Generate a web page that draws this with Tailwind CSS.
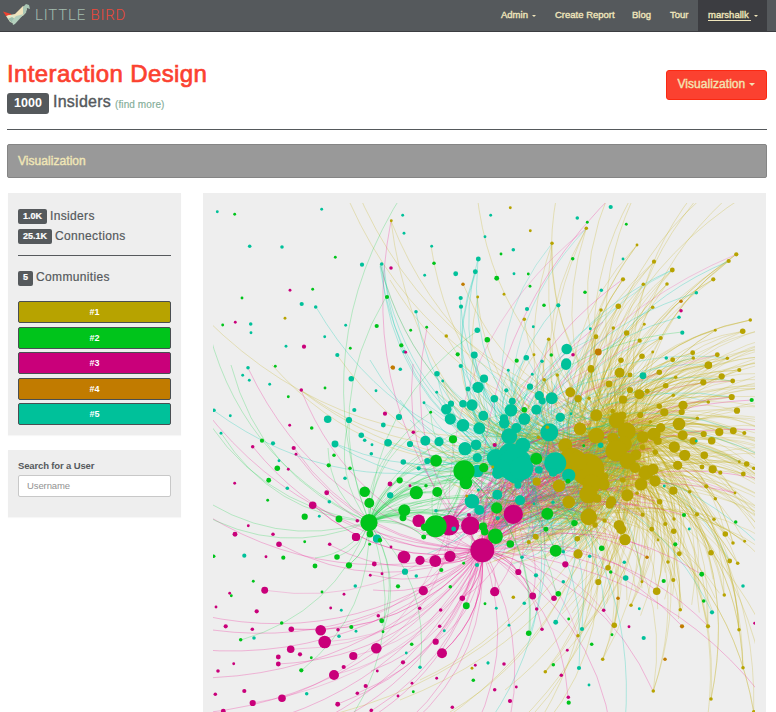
<!DOCTYPE html>
<html lang="en">
<head>
<meta charset="utf-8">
<title>Little Bird - Interaction Design</title>
<script src="https://cdn.jsdelivr.net/npm/@tailwindcss/browser@4"></script>
</head>
<body class="h-[712px] w-[776px] overflow-hidden bg-white font-['Liberation_Sans',Arial,sans-serif] text-[#55595c]">
<header class="flex h-8 items-stretch justify-between border-b border-[#3c3d41] bg-[#55595c]">
  <a class="flex items-start pl-[3px]">
    <svg class="mt-[3px]" width="28" height="23" viewBox="0 0 28 23">
      <path d="M0 8.5 8 11 9 14 3 13Z" fill="#f0412f"/>
      <path d="M4 12.5 12 11 20 3 24 6 21 12 16 15 9 16Z" fill="#f1e3bb"/>
      <path d="M20 4 23 1 26 2 27 6 24 5 23 10 20 12Z" fill="#a9c6b4"/>
      <path d="M3 13 10 12 16 14 10 20 7 19Z" fill="#e4e5c6"/>
      <path d="M5 16 9 14 12 16 9 20Z" fill="#9dc0ae"/>
      <path d="M9 18 13 13 21 11 12 21 10 22Z" fill="#b4d0bd"/>
    </svg>
    <span class="ml-[4px] mt-[7px] whitespace-pre font-['Roboto',sans-serif] text-[15px] font-light leading-4 tracking-[0.8px] text-[#a3bcae]">LITTLE <span class="text-[#f0483a]">BIRD</span></span>
  </a>
  <nav class="flex text-[9.5px] leading-[30px] text-[#f0e6bc] [-webkit-text-stroke:0.35px]">
    <span class="flex h-[30px] w-[54px] items-center">Admin<i class="ml-1 mt-px border-x-2 border-t-2 border-x-transparent"></i></span>
    <span class="w-[77px]">Create Report</span>
    <span class="w-[38px]">Blog</span>
    <span class="w-[28px]">Tour</span>
    <span class="mr-[9px] flex w-[69px] items-center bg-[#3c3d41] pl-[10px]"><span class="whitespace-pre border-b border-[#f0e6bc] leading-[10px]">marshallk </span><i class="ml-[3px] mt-px border-x-2 border-t-2 border-x-transparent"></i></span>
  </nav>
</header>

<main class="pl-[7px] pr-[9px]">
  <section class="flex h-[98px] justify-between border-b border-[#55595c]">
    <div class="pt-[28px]">
      <h1 class="text-[24px] leading-[28px] tracking-[0.38px] text-[#fb4130] [-webkit-text-stroke:0.7px]">Interaction Design</h1>
      <div class="mt-[5px] flex items-center">
        <span class="flex h-[21px] w-[42px] items-center justify-center rounded-[3px] bg-[#55595c] text-[12.5px] font-bold text-white">1000</span>
        <span class="-mt-[3px] ml-1 text-[16px] leading-4 tracking-[0.25px] [-webkit-text-stroke:0.4px]">Insiders</span>
        <span class="ml-1 mt-[2px] text-[10px] leading-3 tracking-[0.1px] text-[#84ad98] [-webkit-text-stroke:0.15px]">(find more)</span>
      </div>
    </div>
    <button class="mt-[38px] flex h-[30px] w-[101px] items-center rounded-[3px] border border-[#fb2912] bg-[#fb4130] pb-[2px] pl-[10.5px] text-[12px] tracking-[0.05px] text-[#f3e3b3] [-webkit-text-stroke:0.4px]">Visualization<i class="ml-1 border-x-[3px] border-t-[3px] border-x-transparent"></i></button>
  </section>
  <h2 class="mt-[14px] flex h-[34px] items-center rounded-[2px] border border-[#858585] bg-[#999] pl-[10px] text-[12px] tracking-[0.05px] text-[#f0e6b6] [-webkit-text-stroke:0.4px]">Visualization</h2>
  <div class="mt-[15px] flex">
    <aside class="ml-px w-[173px] shrink-0 text-[12px] tracking-[0.35px]">
      <div class="h-[242px] bg-[#eee] px-[10px] pt-[13px] shadow-[0_1px_1px_#00000008]">
        <p class="flex h-5 items-center [-webkit-text-stroke:0.2px]"><b class="mr-[3px] mt-px flex h-[15px] w-[29px] items-center justify-center rounded-[2px] bg-[#55595c] text-[9px] tracking-normal text-white">1.0K</b>Insiders</p>
        <p class="flex h-5 items-center [-webkit-text-stroke:0.2px]"><b class="mr-[3px] mt-px flex h-[15px] w-[34px] items-center justify-center rounded-[2px] bg-[#55595c] text-[9px] tracking-normal text-white">25.1K</b>Connections</p>
        <hr class="mt-[9px] border-[#55595c]">
        <p class="mt-[11px] flex h-5 items-center [-webkit-text-stroke:0.2px]"><b class="mr-[3px] mt-[2px] flex h-[15px] w-[15px] items-center justify-center rounded-[2px] bg-[#55595c] text-[9px] tracking-normal text-white">5</b>Communities</p>
        <div class="mt-[14px] flex flex-col gap-[3.5px] text-center text-[9px] font-bold leading-5 tracking-normal text-white">
          <span class="h-[22px] rounded-[2px] border border-[#494e52] bg-[#b7a300]">#1</span>
          <span class="h-[22px] rounded-[2px] border border-[#494e52] bg-[#00c41b]">#2</span>
          <span class="h-[22px] rounded-[2px] border border-[#494e52] bg-[#c9007a]">#3</span>
          <span class="h-[22px] rounded-[2px] border border-[#494e52] bg-[#c17b00]">#4</span>
          <span class="h-[22px] rounded-[2px] border border-[#494e52] bg-[#00c19a]">#5</span>
        </div>
      </div>
      <div class="mt-[15px] h-[67px] bg-[#eee] px-[10px] pt-[10px] tracking-normal shadow-[0_1px_1px_#00000008]">
        <label class="block text-[9.5px] font-bold leading-3 tracking-[-0.14px]">Search for a User</label>
        <div class="mt-[3px] h-[22px] rounded-[2px] border border-[#c8c8c8] bg-white pl-2 text-[9.5px] leading-5 tracking-[-0.1px] text-[#929292]">Username</div>
      </div>
    </aside>
    <div class="ml-[22px] h-[519px] w-[563px] shrink-0 bg-[#eee] pl-[10px] pt-[10px]">
      <svg id="graph" width="542" height="509" viewBox="213 203 542 509" class="block overflow-hidden"><g id="edges" fill="none" stroke-width="1"></g><g id="nodes"></g></svg>
    </div>
  </div>
</main>

<script>
const COLORS = {y:'#b7a300', g:'#00c41b', p:'#c9007a', o:'#c17b00', t:'#00c19a'};
const LINES = {y:'#c0ad10', g:'#10d040', p:'#ee1490', t:'#00cdb0'};
// Each sheet: origin x, origin y, then colour-keyed "x,y,r" triples at three units per pixel.
const SHEETS = [
[203,193,{
t:'43,56,4 356,49,4 140,160,5 237,162,5 477,215,6 536,213,5 296,333,6 338,342,5 143,393,5 144,419,4 428,397,4 365,431,4 249,460,4 403,486,6 135,524,5',
g:'95,64,4 397,193,4 329,289,4 117,315,4 59,396,4 552,312,6 521,399,6 442,466,4 217,520,4',
p:'564,225,5 261,292,4 97,388,4 303,461,6',y:'565,83,4 246,376,4',o:'568,523,5'}],
[390,193,{
t:'38,67,4 42,121,4 302,67,4 285,131,4 125,160,4 104,247,4 197,242,7 265,198,7 256,236,7 370,170,5 372,242,4 562,75,5 212,315,6 213,341,6 78,356,5 262,412,8 253,486,10 411,348,6 505,337,6 430,401,4 409,494,8 456,505,5 212,519,6 530,468,15 529,511,14 42,476,5',
g:'132,211,5 333,183,4 548,197,5 320,256,7 415,243,4 420,280,4 462,337,5 62,412,4 110,403,4 34,457,6 292,440,8 203,484,6 380,503,6 484,486,5',
p:'47,478,4 549,485,5',y:'361,44,4 421,113,4 486,151,5 342,304,4 263,312,4 403,379,5 169,429,5 476,439,5 432,485,4',o:'219,274,5'}],
[576,193,{
t:'104,42,6 141,198,4 76,292,5 43,407,4 361,299,5 309,373,5 319,419,6 271,495,5',
g:'34,88,4 151,94,4 27,298,5',p:'315,353,5',
y:'31,106,5 183,156,4 234,206,6 289,231,7 141,259,6 202,274,5 273,273,5 481,184,6 458,204,6 412,259,6 127,340,8 75,351,5 230,343,5 205,394,4 112,405,5 152,420,8 60,431,7 191,443,6 254,435,6 198,490,8 230,477,4 135,502,8 290,500,7 350,479,7 352,495,5 397,517,11 424,485,7 454,496,5 418,412,4 500,415,8 523,381,5 45,525,9',
o:'315,325,5 67,477,10'}],
[203,365,{
t:'119,31,4 139,46,4 200,58,4 82,152,4 33,136,5 54,205,4 445,41,8 519,77,4 454,135,6 374,163,11 438,165,9 541,180,7 475,211,8 485,226,5 507,239,4 505,266,5 555,233,11 396,237,10 210,235,6 228,287,4 253,370,5 426,340,5 379,410,5 349,454,4 562,391,9 520,522,9',
g:'366,69,4 256,95,4 326,189,5 177,227,6 393,271,5 377,301,6 441,310,5 223,310,8 197,346,7 194,406,4 485,380,15 499,414,14 498,473,25 501,507,10 408,462,10 305,455,9 531,525,6',
p:'295,75,5 546,146,6 260,181,4 272,249,6 279,268,4 149,245,5 256,313,4 95,355,4 371,383,7 329,421,11 463,467,5 136,482,4 210,508,5 96,508,7 561,357,7 459,516,12',y:''}],
[390,365,{
t:'31,13,5 141,26,8 158,48,4 140,82,4 102,113,4 27,156,9 282,41,12 264,67,16 234,72,7 313,101,11 349,76,6 355,16,4 420,65,9 427,28,4 448,92,13 457,108,10 485,100,17 439,134,14 246,120,16 219,116,11 183,116,9 169,133,15 181,162,16 219,181,18 268,190,17 280,152,14 511,157,13 543,146,4 403,162,17 367,109,10 363,136,18 343,175,15 342,160,12 379,189,14 358,214,23 398,241,22 478,202,26 106,227,14 147,230,13 60,237,9 40,291,8 86,310,6 112,288,9 225,251,19 258,239,15 262,278,13 317,279,26 360,270,34 376,300,50 333,310,25 378,330,26 395,310,34 323,325,16 384,361,10 262,318,18 446,315,11 496,295,32 489,323,12 536,331,19 322,389,14 390,406,14 246,409,21 268,435,14 191,492,7 138,437,5 323,460,6 265,375,4 432,416,4 489,412,5 528,0,14 0,233,5 0,391,8',
g:'403,134,8 122,142,4 189,223,12 138,287,17 222,318,31 228,354,18 281,308,13 439,281,17 29,346,9 79,383,19 142,381,14 108,362,5 43,436,17 39,458,10 137,484,32 104,487,11 101,516,7 320,429,16 472,446,17 553,474,9 468,493,7 279,485,12 284,500,11 316,512,21 534,349,7',
p:'70,202,5 314,240,6 86,467,18 177,481,30 241,482,27 370,448,28 237,450,6 60,362,4',
y:'463,44,5 502,30,5 541,82,14 564,101,10 472,187,5 445,217,5 526,241,20 545,285,36 440,350,12 507,362,18 536,411,18 308,306,4 436,514,7 562,522,6 230,393,4',o:'9,8,6'}],
[576,365,{
t:'201,32,10 74,241,8 361,228,4 265,363,4 340,492,4',g:'527,105,6 23,242,4 324,450,6 479,471,5 0,473,5',
y:'45,13,10 131,23,14 162,30,7 250,22,8 299,37,5 99,57,10 269,62,8 162,75,9 214,79,7 190,88,14 141,104,12 292,91,5 250,124,8 265,142,12 321,121,13 317,141,9 7,101,10 39,100,5 61,151,17 110,139,7 139,152,12 122,166,23 152,199,26 12,191,18 61,212,23 111,220,16 145,237,22 193,150,9 223,170,5 254,188,13 234,208,19 245,228,12 200,216,17 309,177,18 364,160,5 397,111,5 382,52,9 437,34,9 398,0,10 470,48,7 490,15,6 467,96,9 483,137,9 472,197,10 505,204,6 430,201,12 383,207,9 407,227,11 352,228,11 320,211,14 295,246,16 326,271,16 385,271,11 305,301,13 378,306,7 410,313,12 433,323,6 512,297,8 490,290,4 533,310,5 502,327,7 200,247,8 238,262,8 180,269,15 121,257,31 155,288,23 177,308,15 210,323,21 231,313,16 237,348,16 195,358,18 292,377,12 341,380,5 391,364,6 418,401,5 477,384,4 251,410,8 183,385,5 154,391,17 106,409,14 101,419,12 85,335,12 83,358,17 36,314,48 5,287,28 47,356,27 37,388,26 64,401,12 38,456,24 57,480,8 86,467,6 129,481,15 136,493,14 147,524,15 227,493,7 200,449,6 268,477,6 294,462,5 293,499,8 363,448,6 414,463,5 448,507,8 140,345,8'}],
[203,537,{
t:'124,56,6 153,303,5 311,470,5 457,147,5 415,220,4 408,298,5 459,283,4 606,104,9 640,117,5 522,5,12 724,281,4 610,348,4 651,391,5 822,84,6 855,378,4 226,360,4',
g:'32,58,5 151,133,4 241,62,6 305,14,4 336,87,7 402,60,8 438,85,9 500,22,4 531,10,6 662,0,6 715,99,6 742,149,5 782,79,4 585,148,6 357,165,4 85,176,4 113,308,5 236,258,5 295,400,6 325,362,4 445,270,6 536,251,7 540,284,4 626,322,5 631,464,4 811,430,5 790,206,10 846,200,4',
p:'228,22,8 189,59,4 380,22,5 459,0,12 564,30,4 514,81,7 502,115,4 537,110,4 603,60,18 651,70,13 697,72,17 741,58,16 838,40,35 661,161,13 778,184,8 185,160,10 80,169,4 39,210,4 161,223,6 68,268,6 148,277,5 265,277,8 353,280,15 405,278,5 365,315,18 263,337,11 291,352,6 226,360,7 226,381,7 92,380,4 45,402,5 37,472,5 124,462,6 149,498,9 237,484,11 61,523,7 393,414,14 422,390,6 451,357,12 520,334,15 404,502,7 463,469,5 488,447,6 505,520,5 585,477,4 523,402,4 600,376,6 627,439,4 698,314,9 717,349,14 710,268,5 713,219,5 650,214,5 526,236,5 383,213,4 423,172,4 701,424,4 748,511,5 817,385,4',y:'807,394,4'}],
[486,537,{
t:'108,61,5 150,115,6 232,44,5 311,58,5 415,76,5 419,123,8 232,134,5 115,199,5 31,214,4 69,265,4 209,256,7 288,276,6 279,393,6 309,444,4 473,303,6 460,215,4 678,226,6 771,147,5 6,378,4',
g:'29,0,20 73,21,11 209,41,17 347,34,8 374,105,5 217,170,8 128,289,8 248,246,4 378,293,4 317,322,5 202,383,5 248,497,6 533,132,6 568,22,6 647,112,7 653,192,5',
p:'97,105,9 238,82,9 26,164,13 140,177,10 204,184,8 152,216,5 168,277,5 353,220,5 429,269,4 244,340,4 54,381,5 226,415,5 247,481,5 91,450,4 26,458,5 72,492,6 806,259,4',
y:'128,15,6 150,0,8 274,5,8 276,51,13 366,92,8 337,135,9 417,8,16 468,134,4 516,9,4 546,75,5 580,50,7 562,129,6 512,163,11 583,218,5 435,205,5 385,265,8 276,296,5 350,367,5 178,404,5 82,181,5 502,462,5 666,268,6 675,47,8 731,72,7 741,18,5 776,13,4 755,79,5 715,174,5 759,278,5 771,392,5 675,486,5 803,524,5',
o:'483,61,5 396,184,5 588,268,6 537,367,5'}]
];
const nodes = [];
for (const [ox, oy, groups] of SHEETS)
  for (const c in groups)
    for (const s of groups[c].split(' ').filter(Boolean)) {
      const [x, y, r] = s.split(',').map(Number);
      nodes.push({c, x: ox + x / 3, y: oy + y / 3, r: r / 3 + (r > 12 ? .3 : .1)});
    }

let seed = 20417;
const rnd = () => (seed = (seed * 16807) % 2147483647) / 2147483647;
const pick = a => a[Math.floor(rnd() * a.length)];
const edges = [];
const edge = (c, a, x, y, o = .24) => {
  const cx = (a[0] + x) / 2 + (y - a[1]) / 4, cy = (a[1] + y) / 2 + (a[0] - x) / 4;
  edges.push(`<path d="M${a[0].toFixed(1)} ${a[1].toFixed(1)}Q${cx.toFixed(1)} ${cy.toFixed(1)} ${x.toFixed(1)} ${y.toFixed(1)}" stroke="${LINES[c]}" stroke-opacity="${o}"/>`);
};
const P = [482,550], G = [369,522], G2 = [463,471], G3 = [435,526], T = [515,462], T2 = [555,463];
const Y = [[617,450],[588,468],[572,460],[626,431],[590,490],[589,517],[616,420],[641,433],[597,435],[630,462]];
const TH = [T, T2, [496,458], [509,436], [549,432], [528,468]];
const PH = [P, P, [513,514], [470,525], [449,525]];

// Community members joined to their hubs
for (const n of nodes) {
  const d = Math.hypot(n.x - 600, n.y - 455), dt = Math.hypot(n.x - 510, n.y - 460), dp = Math.hypot(n.x - 482, n.y - 550);
  if (n.c === 'y' && n.x > 540) {
    const k = d < 110 ? 5 : 3;
    for (let i = 0; i < k; i++) edge('y', pick(Y), n.x, n.y, .24);
    if (rnd() < .16) edge('t', pick(TH), n.x, n.y, .22);
    if (rnd() < .12) edge('p', pick(PH), n.x, n.y, .2);
  }
  if (n.c === 't' && dt < 115) for (let i = 0; i < 3; i++) edge(rnd() < .7 ? 't' : 'y', i ? pick(TH) : pick(Y), n.x, n.y, .24);
  if (n.c === 'g' && dt < 125 && n.y > 400) { edge('g', G2, n.x, n.y); edge('g', G, n.x, n.y); }
  if (n.c === 'p' && dp < 70) { edge('p', P, n.x, n.y, .3); edge('p', [513,514], n.x, n.y, .26); }
  if (n.c === 'p' && n.r > 2.6 && n.y > 590 && n.x < 460) edge('p', pick(PH), n.x, n.y, .2);
}
// Links between the community cores
for (let i = 0; i < 230; i++) {
  const a = pick(Y), b = pick(TH);
  edge(pick(['y','y','t']), a, b[0] + rnd() * 90 - 45, b[1] + rnd() * 130 - 60, .25);
}
for (let i = 0; i < 80; i++) edge('p', pick(PH), 545 + rnd() * 110, 420 + rnd() * 110, .26);
for (let i = 0; i < 75; i++) edge(pick(['p','p','t','y']), pick(TH), 425 + rnd() * 130, 505 + rnd() * 50, .27);
for (let i = 0; i < 20; i++) edge('g', pick([G, G2, G3]), 400 + rnd() * 130, 430 + rnd() * 110, .23);
for (let i = 0; i < 110; i++) edge(pick(['y','y','t']), pick(Y), 475 + rnd() * 100, 500 + rnd() * 65, .24);
// Rays towards members outside the viewport
for (let i = 0; i < 75; i++) edge('y', pick(Y), 765 + rnd() * 90, 315 + rnd() * 270, .22);
for (let i = 0; i < 42; i++) edge('y', pick(Y), 560 + rnd() * 160, 540 + rnd() * 80, .24);
for (const [x, y] of [[640,182],[660,150],[735,160],[730,175],[755,175],[790,170],[610,190],[705,180],[475,170],[560,180],[770,730],[700,760],[345,160],[500,740],[520,750],[545,725],[530,718],[450,712],[420,735],[310,720],[505,690],[420,680],[400,700],[800,640],[790,590],[790,700]]) edge('y', pick(Y), x, y, .26);
for (const [x, y] of [[391,221],[446,336],[391,221],[463,284],[477,297],[478,297],[431,246],[524,320],[534,355],[380,264],[337,355],[205,318],[301,390],[300,390],[272,365],[390,280],[350,203],[548,340]]) edge('y', pick(Y.concat(TH)), x, y, .25);
for (const [x, y] of [[380,264],[381,264],[382,265],[384,265],[380,266],[316,307],[478,259],[475,272],[476,272],[478,259],[461,307],[460,298],[416,312],[474,355],[558,305],[335,444],[336,444],[388,443],[400,400],[410,420],[370,360],[213,410]]) edge('t', pick(TH), x, y, .28);
for (const [x, y] of [[729,261],[672,270],[696,293],[679,317],[731,397],[643,376],[770,460],[735,430],[712,612],[775,560],[579,668],[556,622],[582,629],[480,735],[625,725],[530,633],[605,610]]) edge('t', pick(TH), x, y, .28);
for (const [x, y] of [[391,221],[603,322],[623,279],[640,170],[427,328],[301,390],[294,448],[296,454],[253,447],[248,368],[190,390],[313,505],[313,505],[326,492],[170,490],[279,544],[330,545],[372,575],[180,610],[170,622],[150,643],[140,675],[150,716],[195,735],[220,755],[280,745],[340,735],[345,725],[385,740],[410,725],[460,755],[490,780],[612,735],[790,735],[653,691],[682,626],[708,626],[568,697],[542,629],[553,598],[518,572],[533,596],[657,591],[701,574],[684,515],[735,493],[765,430],[752,400],[765,480],[732,397],[650,550],[647,557],[413,364],[373,590],[292,629],[278,664],[338,704],[371,671],[442,653],[436,642],[358,693],[463,598],[442,653]]) edge('p', P, x, y, .27);
for (const [x, y] of [[231,365],[205,315],[195,400],[195,510],[190,490],[315,558],[337,557],[349,565],[241,640],[302,670],[328,448],[349,420],[405,190],[386,297],[221,433],[477,331],[349,565],[382,626],[383,632],[420,667],[350,720],[426,492],[437,493],[460,475],[450,450],[470,460],[434,460],[418,492],[454,480]]) edge('g', G, x, y, .26);
for (const [x, y] of [[682,332],[529,633],[530,633],[556,593],[555,550],[576,530],[602,548]]) edge('g', G2, x, y, .27);

// Large discs stack by community, small ones stay on top
const layer = n => n.r < 3.3 ? 9 : 'yotpg'.indexOf(n.c);
document.getElementById('edges').innerHTML = edges.join('');
document.getElementById('nodes').innerHTML = nodes.sort((a, b) => layer(a) - layer(b)).map(n => `<circle cx="${n.x.toFixed(1)}" cy="${n.y.toFixed(1)}" r="${n.r.toFixed(2)}" fill="${COLORS[n.c]}"/>`).join('');
</script>
</body>
</html>
